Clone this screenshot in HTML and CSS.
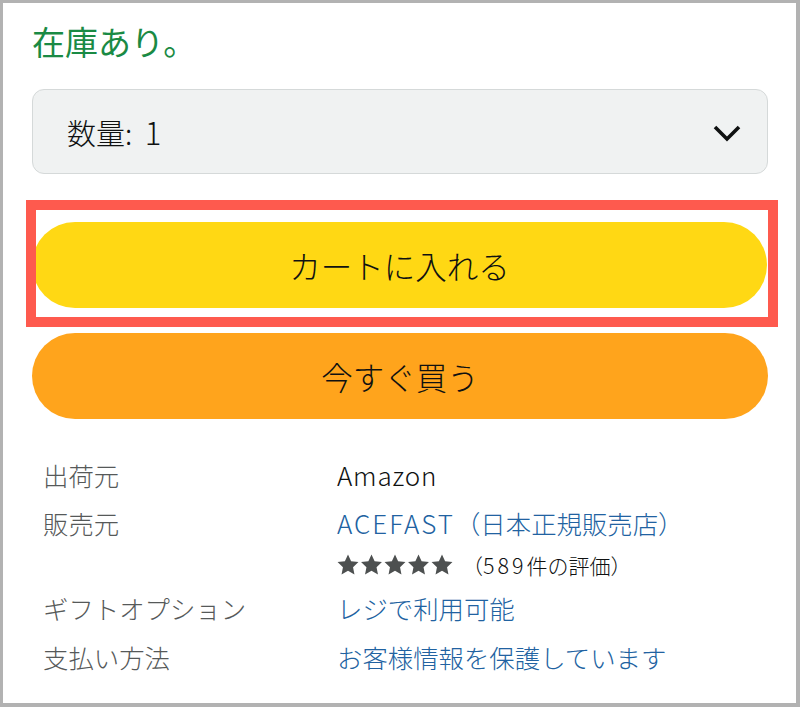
FILE: index.html
```html
<!DOCTYPE html>
<html lang="ja">
<head>
<meta charset="utf-8">
<link rel="stylesheet" href="styles.css">
</head>
<body>
<div class="frame">
  <div class="content">
    <div class="stock">在庫あり。</div>
    <div class="select">
      <span class="select-label">数量: <span class="num">1</span></span>
      <svg class="chevron" width="28" height="18" viewBox="0 0 28 18"><path d="M2 3 L14 15 L26 3" fill="none" stroke="#0f1111" stroke-width="3.6" stroke-linecap="butt" stroke-linejoin="miter"/></svg>
    </div>
    <div class="cart-wrap">
      <div class="btn btn-cart">カートに入れる</div>
    </div>
    <div class="btn btn-buy">今すぐ買う</div>
    <div class="details">
      <div class="row r1">
        <div class="label">出荷元</div>
        <div class="value"><span class="lat">Amazon</span></div>
      </div>
      <div class="row r2">
        <div class="label">販売元</div>
        <div class="value">
          <div class="link"><span class="lat lat-wide">ACEFAST</span>（日本正規販売店）</div>
          <div class="rating">
            <span class="stars">
              <svg width="117" height="22" viewBox="0 0 117 22">
                <defs><path id="st" d="M11 0.5 L14.12 7.21 L21.46 8.1 L16.04 13.14 L17.47 20.4 L11 16.8 L4.53 20.4 L5.96 13.14 L0.54 8.1 L7.88 7.21 Z"/></defs>
                <use href="#st" x="0" fill="#4d5050"/>
                <use href="#st" x="23.5" fill="#4d5050"/>
                <use href="#st" x="47" fill="#4d5050"/>
                <use href="#st" x="70.5" fill="#4d5050"/>
                <use href="#st" x="94" fill="#4d5050"/>
              </svg>
            </span>
            <span class="count">（<span class="digits">589</span>件の評価）</span>
          </div>
        </div>
      </div>
      <div class="row r3">
        <div class="label">ギフトオプション</div>
        <div class="value link">レジで利用可能</div>
      </div>
      <div class="row r4">
        <div class="label">支払い方法</div>
        <div class="value link">お客様情報を保護しています</div>
      </div>
    </div>
  </div>
</div>
</body>
</html>
```
FILE: styles.css
```css
html, body {
  margin: 0;
  padding: 0;
  background: #ffffff;
}
body {
  font-family: "Noto Sans CJK JP", "Noto Sans", sans-serif;
  font-weight: 300;
  color: #0f1111;
}
.frame {
  width: 800px;
  height: 707px;
  box-sizing: border-box;
  border-style: solid;
  border-color: #b2b2b2;
  border-width: 3px 4px 4px 3px;
  background: #ffffff;
  overflow: hidden;
}
.content {
  padding: 18px 28px 0 29px;
}
.stock {
  font-size: 33px;
  line-height: 40px;
  color: #1a8a44;
  font-weight: 400;
}
.select {
  margin-top: 28px;
  height: 85px;
  box-sizing: border-box;
  background: #f0f2f2;
  border: 1.5px solid #d5d9d9;
  border-radius: 12px;
  display: flex;
  align-items: center;
  justify-content: space-between;
  padding: 0 26px 0 34px;
}
.select-label {
  font-size: 29px;
  line-height: 40px;
}
.num {
  font-size: 31px;
  margin-left: 6px;
}
.chevron {
  display: block;
  margin-top: 2px;
}
.cart-wrap {
  position: relative;
  margin-top: 48px;
}
.cart-wrap::after {
  content: "";
  position: absolute;
  left: -6px;
  right: -10px;
  top: -22px;
  bottom: -19px;
  border: 10px solid #fe5a4e;
  pointer-events: none;
}
.btn {
  height: 86px;
  border-radius: 43px;
  display: flex;
  align-items: center;
  justify-content: center;
  font-size: 31.5px;
  color: #0f1111;
}
.btn-cart {
  background: #ffd814;
  margin-right: 1px;
}
.btn-buy {
  background: #ffa41c;
  margin-top: 25px;
}
.details {
  margin-top: 35px;
  padding-left: 11px;
  font-size: 25.4px;
  line-height: 42px;
}
.row {
  display: grid;
  grid-template-columns: 294px 1fr;
}
.r2 { margin-top: 6px; }
.r3 { margin-top: 1px; }
.r4 { margin-top: 7px; }
.label {
  color: #565959;
}
.value {
  color: #0f1111;
}
.link {
  color: #2162a1;
}
.lat {
  font-size: 26px;
  letter-spacing: 0.8px;
}
.lat-wide {
  letter-spacing: 2px;
}
.rating {
  display: flex;
  align-items: center;
  height: 42px;
}
.stars svg {
  display: block;
}
.count {
  font-size: 21px;
  color: #0f1111;
  margin-left: 8px;
}
.digits {
  font-size: 21.5px;
  letter-spacing: 3px;
}
```
